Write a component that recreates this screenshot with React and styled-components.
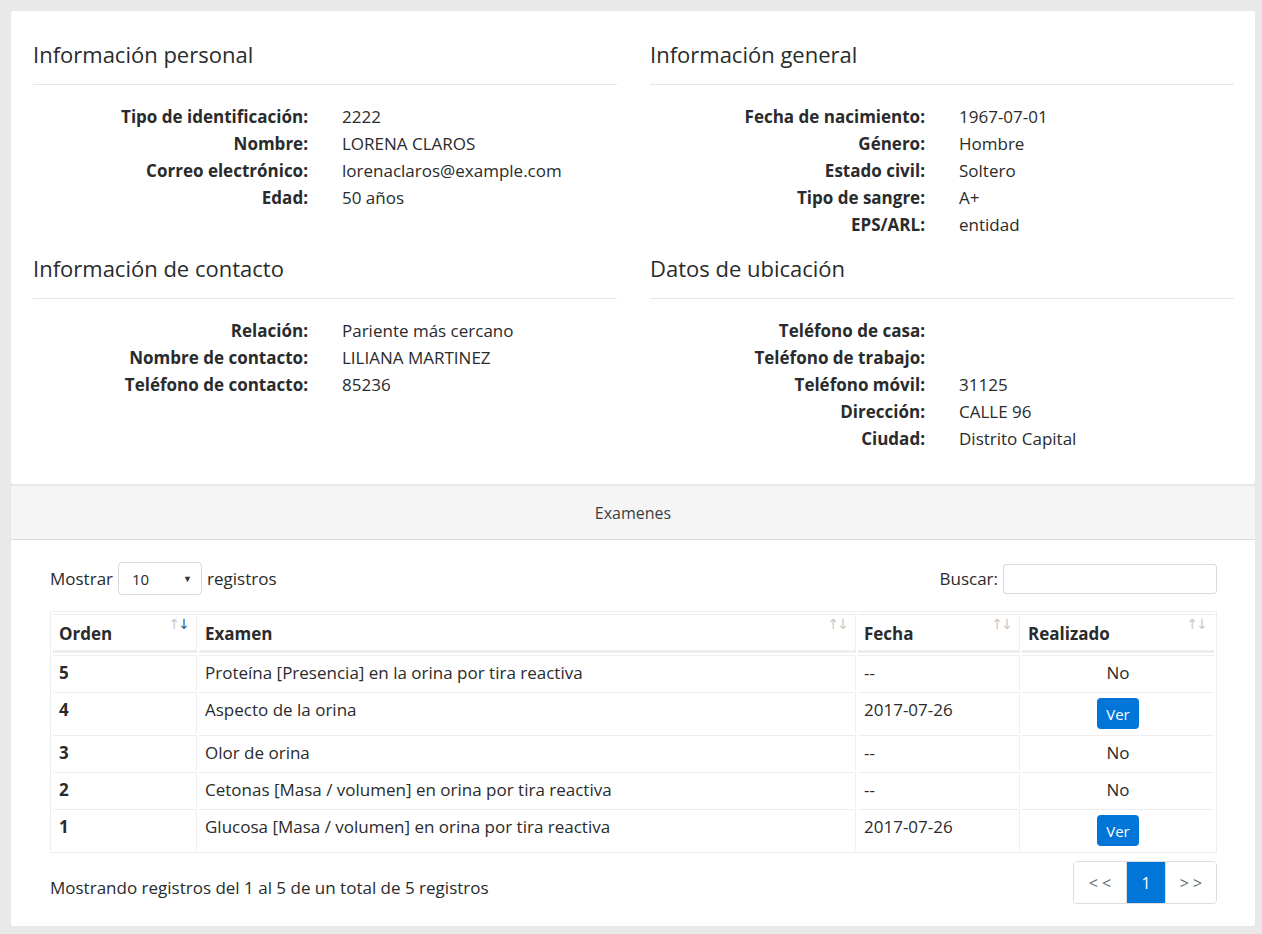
import React from 'react';
import styled, { createGlobalStyle } from 'styled-components';

const GlobalStyle = createGlobalStyle`
  html, body {
    margin: 0;
    background: #e9e9e9;
    font-family: "Open Sans", "Noto Sans", sans-serif;
    font-size: 17px;
    color: #292b2c;
  }
  * { box-sizing: border-box; }
`;

const Page = styled.div`
  padding: 10px 6px 7px 10px;
`;

const Card = styled.div`
  background: #fff;
  border: 1px solid rgba(0, 0, 0, 0.09);
  border-radius: 4px;
  overflow: hidden;
`;

const InfoBody = styled.div`
  display: grid;
  grid-template-columns: 1fr 1fr;
  column-gap: 33px;
  row-gap: 17px;
  padding: 30px 21px 32px 22px;
  align-items: start;
`;

const Section = styled.section``;

const Heading = styled.h4`
  margin: 0;
  font-size: 22px;
  font-weight: 400;
  line-height: 26px;
  padding-bottom: 17px;
  border-bottom: 1px solid #e5e5e5;
`;

const Fields = styled.dl`
  display: grid;
  grid-template-columns: 1fr 1fr;
  column-gap: 34px;
  margin: 18px 0 0;
  line-height: 27px;
`;

const Label = styled.dt`
  text-align: right;
  font-weight: 700;
`;

const Value = styled.dd`
  margin: 0;
  min-height: 27px;
`;

const CardHeader = styled.div`
  background: #f5f5f6;
  border-bottom: 1px solid rgba(0, 0, 0, 0.1);
  text-align: center;
  line-height: 24px;
  padding: 15px 0 14px;
  font-size: 16px;
  color: #3a3d3f;
`;

const TableBody = styled.div`
  padding: 22px 38px 22px 39px;
`;

const Toolbar = styled.div`
  display: flex;
  justify-content: space-between;
  align-items: center;
  height: 33px;
  margin-bottom: 16px;
`;

const ToolGroup = styled.label`
  display: flex;
  align-items: center;
  gap: 5px;
`;

const Select = styled.div`
  width: 84px;
  height: 33px;
  border: 1px solid rgba(0, 0, 0, 0.15);
  border-radius: 4px;
  display: flex;
  align-items: center;
  justify-content: space-between;
  padding: 0 9px 0 13px;
  font-size: 15px;

  &::after {
    content: "▼";
    font-size: 9px;
    color: #333;
  }
`;

const SearchInput = styled.input`
  width: 214px;
  height: 30px;
  border: 1px solid rgba(0, 0, 0, 0.15);
  border-radius: 4px;
  font: inherit;
  padding: 0 8px;
`;

const Table = styled.table`
  width: 100%;
  table-layout: fixed;
  border-collapse: separate;
  border-spacing: 2px;
  border: 1px solid #eceeef;
`;

const HeadCell = styled.th`
  position: relative;
  width: ${p => p.$w}px;
  text-align: left;
  font-weight: 700;
  padding: 7px 6px 4px;
  line-height: 24px;
  border-top: 1px solid #eceeef;
  border-right: 1px solid #eceeef;
  border-bottom: 3px solid #eceeef;
  &:last-child { border-right: 0; }
`;

const SortIcon = styled.span`
  position: absolute;
  top: 1px;
  right: 8px;
  font-family: "DejaVu Sans", sans-serif;
  font-size: 14px;
  font-weight: 400;
  line-height: 16px;
  letter-spacing: -2px;
  color: #c8c8c8;
`;

const ActiveArrow = styled.span`
  color: #2f5a78;
`;

const Cell = styled.td`
  padding: 5px 6px;
  line-height: 24px;
  border-top: 1px solid #eceeef;
  border-right: 1px solid #eceeef;
  text-align: ${p => (p.$center ? 'center' : 'left')};
  font-weight: ${p => (p.$bold ? 700 : 400)};
  vertical-align: top;
  &:last-child { border-right: 0; }
`;

const VerButton = styled.button`
  display: inline-block;
  vertical-align: top;
  margin: 0 0 -1px;
  background: #0275d8;
  color: #fff;
  border: 0;
  border-radius: 4px;
  font-family: inherit;
  font-size: 15px;
  width: 42px;
  height: 31px;
  padding: 0;
`;

const Footer = styled.div`
  display: flex;
  justify-content: space-between;
  align-items: center;
  margin-top: 8px;
`;

const Info = styled.div`
  padding-top: 9px;
`;

const Pager = styled.div`
  display: flex;
  border: 1px solid #ddd;
  border-radius: 4px;
  overflow: hidden;
`;

const PageItem = styled.span`
  height: 41px;
  width: ${p => p.$w}px;
  display: flex;
  align-items: center;
  justify-content: center;
  font-size: 16px;
  background: ${p => (p.$active ? '#0275d8' : '#fff')};
  color: ${p => (p.$active ? '#fff' : '#636c72')};
  letter-spacing: ${p => (p.$active ? 0 : '4px')};
  padding-left: ${p => (p.$active ? 0 : '4px')};
  border-left: ${p => (p.$first ? 0 : '1px solid #ddd')};
`;

const personal = [
  ['Tipo de identificación:', '2222'],
  ['Nombre:', 'LORENA CLAROS'],
  ['Correo electrónico:', 'lorenaclaros@example.com'],
  ['Edad:', '50 años'],
];

const general = [
  ['Fecha de nacimiento:', '1967-07-01'],
  ['Género:', 'Hombre'],
  ['Estado civil:', 'Soltero'],
  ['Tipo de sangre:', 'A+'],
  ['EPS/ARL:', 'entidad'],
];

const contacto = [
  ['Relación:', 'Pariente más cercano'],
  ['Nombre de contacto:', 'LILIANA MARTINEZ'],
  ['Teléfono de contacto:', '85236'],
];

const ubicacion = [
  ['Teléfono de casa:', ''],
  ['Teléfono de trabajo:', ''],
  ['Teléfono móvil:', '31125'],
  ['Dirección:', 'CALLE 96'],
  ['Ciudad:', 'Distrito Capital'],
];

const examenes = [
  { orden: 5, nombre: 'Proteína [Presencia] en la orina por tira reactiva', fecha: '--', hecho: false },
  { orden: 4, nombre: 'Aspecto de la orina', fecha: '2017-07-26', hecho: true },
  { orden: 3, nombre: 'Olor de orina', fecha: '--', hecho: false },
  { orden: 2, nombre: 'Cetonas [Masa / volumen] en orina por tira reactiva', fecha: '--', hecho: false },
  { orden: 1, nombre: 'Glucosa [Masa / volumen] en orina por tira reactiva', fecha: '2017-07-26', hecho: true },
];

const columns = [
  { title: 'Orden', w: 144, active: true },
  { title: 'Examen', w: 657 },
  { title: 'Fecha', w: 162 },
  { title: 'Realizado', w: 192 },
];

const InfoSection = ({ title, rows }) => (
  <Section>
    <Heading>{title}</Heading>
    <Fields>
      {rows.map(([k, v]) => (
        <React.Fragment key={k}>
          <Label>{k}</Label>
          <Value>{v}</Value>
        </React.Fragment>
      ))}
    </Fields>
  </Section>
);

export default function App() {
  return (
    <Page>
      <GlobalStyle />
      <Card>
        <InfoBody>
          <InfoSection title="Información personal" rows={personal} />
          <InfoSection title="Información general" rows={general} />
          <InfoSection title="Información de contacto" rows={contacto} />
          <InfoSection title="Datos de ubicación" rows={ubicacion} />
        </InfoBody>
      </Card>
      <Card>
        <CardHeader>Examenes</CardHeader>
        <TableBody>
          <Toolbar>
            <ToolGroup>
              Mostrar
              <Select>10</Select>
              registros
            </ToolGroup>
            <ToolGroup>
              Buscar:
              <SearchInput type="text" />
            </ToolGroup>
          </Toolbar>
          <Table>
            <thead>
              <tr>
                {columns.map(c => (
                  <HeadCell key={c.title} $w={c.w}>
                    {c.title}
                    <SortIcon>
                      ↑{c.active ? <ActiveArrow>↓</ActiveArrow> : '↓'}
                    </SortIcon>
                  </HeadCell>
                ))}
              </tr>
            </thead>
            <tbody>
              {examenes.map(e => (
                <tr key={e.orden}>
                  <Cell $bold>{e.orden}</Cell>
                  <Cell>{e.nombre}</Cell>
                  <Cell>{e.fecha}</Cell>
                  <Cell $center>{e.hecho ? <VerButton>Ver</VerButton> : 'No'}</Cell>
                </tr>
              ))}
            </tbody>
          </Table>
          <Footer>
            <Info>Mostrando registros del 1 al 5 de un total de 5 registros</Info>
            <Pager>
              <PageItem $first $w={52}>&lt;&lt;</PageItem>
              <PageItem $active $w={39}>1</PageItem>
              <PageItem $w={51}>&gt;&gt;</PageItem>
            </Pager>
          </Footer>
        </TableBody>
      </Card>
    </Page>
  );
}
